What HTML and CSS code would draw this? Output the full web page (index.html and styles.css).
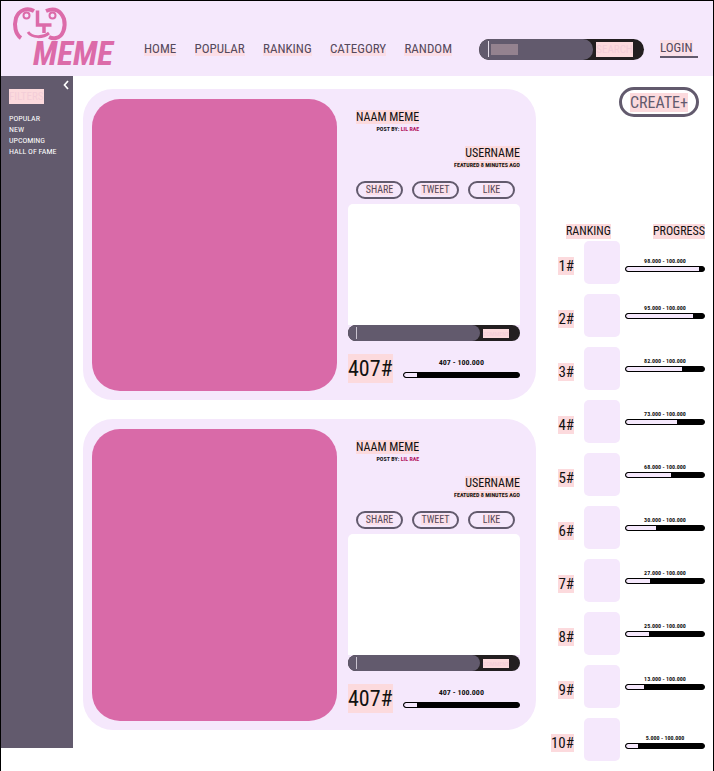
FILE: index.html
```html
<!DOCTYPE html>
<html lang="en">
<head>
<meta charset="utf-8">
<title>LT Meme</title>
<link rel="stylesheet" href="styles.css">
</head>
<body>
<div class="page">
  <header class="header">
    <a class="logo" href="#" aria-label="Meme home">
      <svg class="logo-face" viewBox="0 0 54 34" aria-hidden="true">
        <g fill="none" stroke="#dc6ba9" stroke-width="4">
          <path d="M8 31C2 27 1 18 3 11C6 3 14 0 21 4"/>
          <path d="M33 4C42 0 48 4 51 12C53 20 50 30 43 31C40 32 38 31 36 30"/>
          <path d="M24.500 3.500V18H38.500M31 18V26" stroke-width="3.500"/>
          <path d="M15 25C19 31 30 31 36 26" stroke-width="3"/>
          <circle cx="13.500" cy="8.500" r="3" stroke-width="2"/>
          <circle cx="39.500" cy="8.500" r="3" stroke-width="2"/>
        </g>
      </svg>
      <span class="logo-text">MEME</span>
    </a>
    <nav class="nav">
      <a href="#">HOME</a>
      <a href="#">POPULAR</a>
      <a href="#">RANKING</a>
      <a href="#">CATEGORY</a>
      <a href="#">RANDOM</a>
    </nav>
    <form class="search site-search">
      <input class="search-input" type="text" aria-label="Search memes">
      <button class="search-button" type="button"><span>SEARCH</span></button>
    </form>
    <a class="login" href="#"><span>LOGIN</span></a>
  </header>

  <div class="body">
    <aside class="sidebar">
      <button class="collapse" type="button" aria-label="Collapse filters">
        <svg viewBox="0 0 6 10" aria-hidden="true"><path d="M5 1L1.500 5L5 9" fill="none" stroke="#fff" stroke-width="1.700"/></svg>
      </button>
      <h2>FILTERS</h2>
      <a href="#">POPULAR</a>
      <a href="#">NEW</a>
      <a href="#">UPCOMING</a>
      <a href="#">HALL OF FAME</a>
    </aside>

    <main class="feed">
      <article class="card">
        <div class="picture"></div>
        <div class="details">
          <div class="title"><h3><span>NAAM MEME</span></h3><p>POST BY: <a href="#">LIL RAE</a></p></div>
          <div class="user"><h3><span>USERNAME</span></h3><p><span>FEATURED 8 MINUTES AGO</span></p></div>
          <div class="actions">
            <button type="button"><span>SHARE</span></button>
            <button type="button"><span>TWEET</span></button>
            <button type="button"><span>LIKE</span></button>
          </div>
          <div class="comments"></div>
          <form class="search comment">
            <input class="search-input" type="text" aria-label="Comment">
            <button class="search-button" type="button"><span>COMMENT</span></button>
          </form>
          <div class="score">
            <strong>407#</strong>
            <div class="meter"><span>407 - 100.000</span><div class="bar"><i style="width:12%"></i></div></div>
          </div>
        </div>
      </article>
      <article class="card">
        <div class="picture"></div>
        <div class="details">
          <div class="title"><h3><span>NAAM MEME</span></h3><p>POST BY: <a href="#">LIL RAE</a></p></div>
          <div class="user"><h3><span>USERNAME</span></h3><p><span>FEATURED 8 MINUTES AGO</span></p></div>
          <div class="actions">
            <button type="button"><span>SHARE</span></button>
            <button type="button"><span>TWEET</span></button>
            <button type="button"><span>LIKE</span></button>
          </div>
          <div class="comments"></div>
          <form class="search comment">
            <input class="search-input" type="text" aria-label="Comment">
            <button class="search-button" type="button"><span>COMMENT</span></button>
          </form>
          <div class="score">
            <strong>407#</strong>
            <div class="meter"><span>407 - 100.000</span><div class="bar"><i style="width:12%"></i></div></div>
          </div>
        </div>
      </article>
    </main>

    <aside class="side">
      <button class="create" type="button"><span>CREATE+</span></button>
      <div class="side-head"><h2>RANKING</h2><h2>PROGRESS</h2></div>
      <ol class="ranks">
        <li><b><span>1#</span></b><div class="thumb"></div><div class="meter"><span>98.000 - 100.000</span><div class="bar"><i style="width:94%"></i></div></div></li>
        <li><b><span>2#</span></b><div class="thumb"></div><div class="meter"><span>95.000 - 100.000</span><div class="bar"><i style="width:86%"></i></div></div></li>
        <li><b><span>3#</span></b><div class="thumb"></div><div class="meter"><span>82.000 - 100.000</span><div class="bar"><i style="width:72%"></i></div></div></li>
        <li><b><span>4#</span></b><div class="thumb"></div><div class="meter"><span>73.000 - 100.000</span><div class="bar"><i style="width:65%"></i></div></div></li>
        <li><b><span>5#</span></b><div class="thumb"></div><div class="meter"><span>68.000 - 100.000</span><div class="bar"><i style="width:58%"></i></div></div></li>
        <li><b><span>6#</span></b><div class="thumb"></div><div class="meter"><span>30.000 - 100.000</span><div class="bar"><i style="width:38%"></i></div></div></li>
        <li><b><span>7#</span></b><div class="thumb"></div><div class="meter"><span>27.000 - 100.000</span><div class="bar"><i style="width:31%"></i></div></div></li>
        <li><b><span>8#</span></b><div class="thumb"></div><div class="meter"><span>25.000 - 100.000</span><div class="bar"><i style="width:30%"></i></div></div></li>
        <li><b><span>9#</span></b><div class="thumb"></div><div class="meter"><span>13.000 - 100.000</span><div class="bar"><i style="width:23%"></i></div></div></li>
        <li><b><span>10#</span></b><div class="thumb"></div><div class="meter"><span>5.000 - 100.000</span><div class="bar"><i style="width:16%"></i></div></div></li>
      </ol>
    </aside>
  </div>
</div>
</body>
</html>
```
FILE: styles.css
```css
* { box-sizing: border-box; margin: 0; padding: 0; }

:root {
  --lilac: #f5e8fc;
  --slate: #625a6d;
  --pink: #d96aa8;
  --blush: #fcdadd;
}

body {
  background: #fff;
  color: #111;
  font-family: "Roboto Condensed", "Liberation Sans Narrow", "Open Sans", sans-serif;
  font-size: 13px;
}

a { color: inherit; text-decoration: none; }
button, input { font: inherit; border: 0; background: none; }
h2, h3 { font-size: 12px; font-weight: 400; }

.page {
  min-height: 100vh;
  border: solid #000;
  border-width: 1px 1px 0;
}

.header {
  display: flex;
  align-items: center;
  height: 75px;
  padding: 0 15px 0 12px;
  background: var(--lilac);
  color: #55495c;
}

.logo { display: flex; flex-direction: column; align-self: flex-start; width: 100px; margin-top: 6px; color: #dc6ba9; }
.logo-face { width: 54px; height: 34px; overflow: visible; }
.logo-text { margin-top: -4px; padding-left: 20px; font-size: 33px; line-height: 34px; font-weight: 700; font-style: italic; }

.nav { display: flex; flex: 1; justify-content: space-between; margin: 21px 27px 0 31px; }
.nav a { line-height: 14px; background: linear-gradient(transparent 50%, #fbdde6 50%); }

.search { display: flex; width: 165px; height: 21px; border-radius: 11px; background: #231f20; overflow: hidden; }
.site-search { margin-top: 21px; }
.search-input { flex: 1; min-width: 0; padding-left: 12px; border-radius: 0 10px 10px 0; background: linear-gradient(#c9c3cf, #c9c3cf) 8px 50% / 1px 12px no-repeat var(--slate); color: #fff; font-size: 8px; }
.site-search .search-input {
  background:
    linear-gradient(#e6dfea, #e6dfea) 9px 50% / 1px 16px no-repeat,
    linear-gradient(#94828f, #94828f) 12px 50% / 27px 11px no-repeat,
    var(--slate);
}
.search-button { display: flex; align-items: center; justify-content: center; width: 51px; padding-right: 8px; color: #f3cdd8; font-size: 11px; }
.search-button span { line-height: 15px; background: var(--blush); }

.login { width: 38px; margin: 20px 0 0 16px; border-bottom: 2px solid var(--slate); }
.login span { display: inline-block; line-height: 16px; background: #fae0e8; }

.body { display: flex; align-items: flex-start; }

.sidebar { display: flex; flex-direction: column; align-items: flex-start; width: 72px; height: 672px; padding: 4px 8px; background: var(--slate); color: #fff; font-size: 8px; line-height: 11px; }
.collapse { align-self: flex-end; display: flex; width: 6px; height: 10px; margin-right: -4px; }
.sidebar h2 { margin: -1px 0 9px; line-height: 15px; font-size: 11px; background: var(--blush); color: #f3cdd8; }

.feed { display: flex; flex: 1; flex-direction: column; gap: 19px; padding: 13px 0 40px 10px; }
.card { display: flex; gap: 11px; height: 311px; padding: 10px 16px 9px 9px; border-radius: 30px; background: var(--lilac); }
.picture { flex: 1; border-radius: 28px; background: var(--pink); }
.details { display: flex; flex-direction: column; width: 172px; padding-top: 11px; }
.details h3 span, .user p span { background: var(--blush); }
.details h3 { line-height: 15px; }
.details p { font-size: 6px; line-height: 7px; font-weight: 700; text-align: right; }
.title { align-self: flex-start; margin-left: 8px; }
.title a { color: #b3125e; }
.user { align-self: flex-end; margin-top: 14px; text-align: right; }
.actions { display: flex; justify-content: space-between; margin-top: 13px; padding: 0 5px 0 8px; }
.actions button { width: 47px; height: 18px; border: 2px solid var(--slate); border-radius: 9px; color: #55495c; font-size: 10px; line-height: 12px; }
.actions span { background: #fbdfe8; }
.comments { flex: 1; margin-top: 5px; border-radius: 5px 5px 0 0; background: #fff; }
.comment { width: 100%; height: 16px; }
.comment .search-button { width: 40px; font-size: 6px; }
.comment .search-button span { line-height: 9px; }
.score { display: flex; align-items: center; gap: 10px; height: 50px; padding-top: 4px; }
.score strong { font-size: 22px; line-height: 29px; font-weight: 400; background: var(--blush); }

.meter { display: flex; flex: 1; flex-direction: column; align-items: center; gap: 2px; font-size: 6px; line-height: 7px; font-weight: 700; }
.bar { display: flex; width: 100%; height: 6px; border: 1px solid #000; border-radius: 3px; background: #000; overflow: hidden; }
.bar i { border-radius: 3px 0 0 3px; background: var(--lilac); }
.score .meter { gap: 5px; font-size: 8px; line-height: 9px; }

.side { display: flex; flex-direction: column; width: 177px; padding: 11px 8px 8px 14px; }
.create { align-self: flex-end; width: 80px; height: 30px; margin-right: 6px; border: 3px solid var(--slate); border-radius: 15px; color: var(--slate); font-size: 16px; }
.create span { background: var(--blush); }
.side-head { display: flex; justify-content: space-between; margin-top: 107px; padding-left: 16px; line-height: 15px; }
.side-head h2 { background: var(--blush); }
.ranks { display: flex; flex-direction: column; gap: 10px; margin-top: 2px; list-style: none; }
.ranks li { display: flex; align-items: center; height: 43px; }
.ranks b { width: 24px; padding: 7px 0 0; font-size: 15px; line-height: 17px; font-weight: 400; text-align: right; }
.ranks b span { background: var(--blush); }
.ranks .meter { padding-bottom: 8px; }
.ranks li:first-child .meter, .ranks li:last-child .meter { padding: 4px 0 0; }
.thumb { width: 36px; height: 43px; margin: 0 5px 0 10px; border-radius: 5px; background: var(--lilac); }
```
